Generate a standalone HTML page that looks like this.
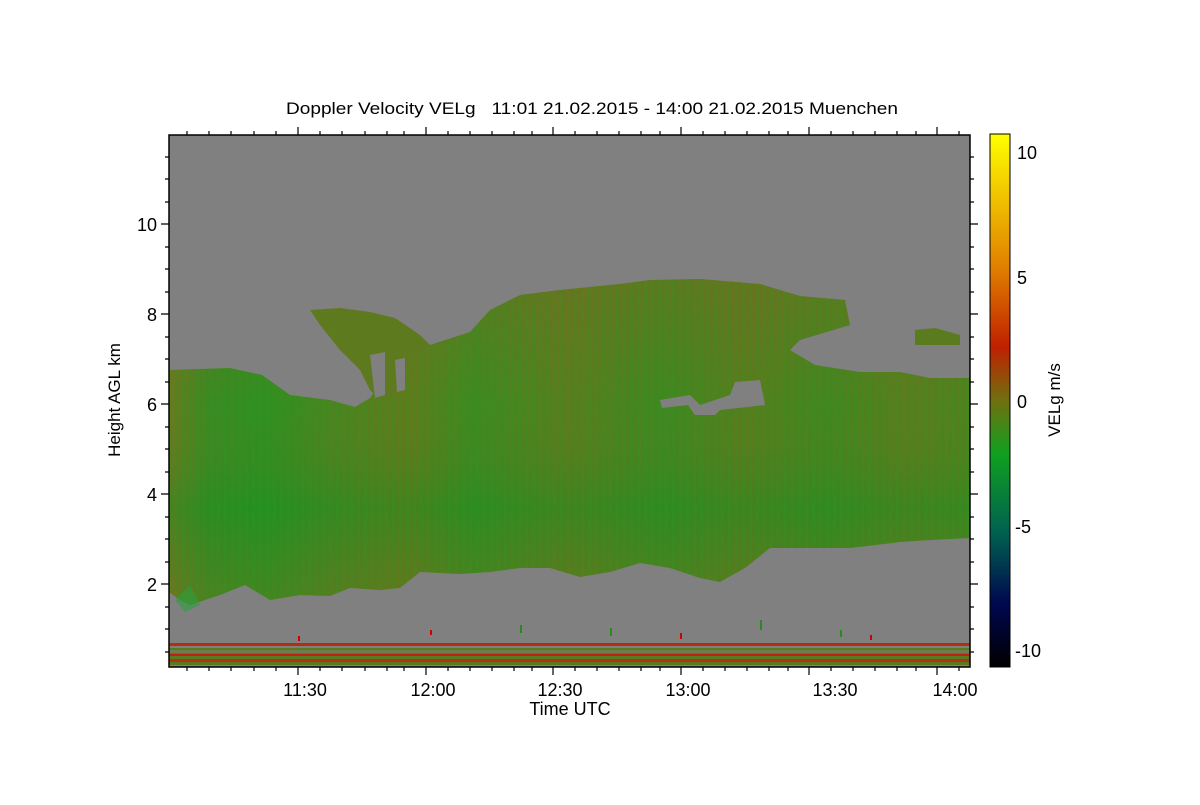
<!DOCTYPE html>
<html><head><meta charset="utf-8"><style>
html,body{margin:0;padding:0;background:#fff;}
svg text{font-family:"Liberation Sans",sans-serif;fill:#000;white-space:pre;}
</style></head><body>
<svg width="1200" height="800" viewBox="0 0 1200 800" xmlns="http://www.w3.org/2000/svg">
<defs>
<linearGradient id="cb" x1="0" y1="0" x2="0" y2="1">
<stop offset="0" stop-color="#ffff00"/>
<stop offset="0.25" stop-color="#e08000"/>
<stop offset="0.4" stop-color="#c02000"/>
<stop offset="0.5" stop-color="#707010"/>
<stop offset="0.6" stop-color="#10a020"/>
<stop offset="0.75" stop-color="#006050"/>
<stop offset="0.88" stop-color="#000850"/>
<stop offset="1" stop-color="#000000"/>
</linearGradient>
<linearGradient id="cl" x1="0" y1="0" x2="1" y2="0">
<stop offset="0" stop-color="#6a7a20"/>
<stop offset="0.05" stop-color="#3a8a22"/>
<stop offset="0.12" stop-color="#2e9020"/>
<stop offset="0.2" stop-color="#4a8420"/>
<stop offset="0.3" stop-color="#607a1c"/>
<stop offset="0.38" stop-color="#3c8a20"/>
<stop offset="0.5" stop-color="#5a7c1e"/>
<stop offset="0.62" stop-color="#3e8820"/>
<stop offset="0.72" stop-color="#587c1e"/>
<stop offset="0.82" stop-color="#42861f"/>
<stop offset="0.92" stop-color="#5a7c1e"/>
<stop offset="1" stop-color="#4e821e"/>
</linearGradient>
<linearGradient id="cv" x1="0" y1="0" x2="0" y2="1">
<stop offset="0" stop-color="#7a6a20" stop-opacity="0.5"/>
<stop offset="0.4" stop-color="#7a6a20" stop-opacity="0"/>
<stop offset="0.7" stop-color="#109020" stop-opacity="0.35"/>
<stop offset="1" stop-color="#7a6a20" stop-opacity="0.3"/>
</linearGradient>
<pattern id="st" width="7" height="40" patternUnits="userSpaceOnUse">
<rect width="3" height="40" fill="#2a9a20" opacity="0.2"/>
</pattern>
</defs>
<text x="286" y="114" font-size="17" textLength="612" lengthAdjust="spacingAndGlyphs">Doppler Velocity VELg   11:01 21.02.2015 - 14:00 21.02.2015 Muenchen</text>
<rect x="169" y="135" width="801" height="532" fill="#808080"/>
<g>
<path d="M169 370 L230 368 L262 375 L290 395 L330 400 L355 407 L370 398 L400 355 L430 345 L470 332 L490 310 L520 295 L560 290 L620 284 L650 280 L700 279 L760 284 L800 296 L845 300 L850 325 L800 340 L790 350 L815 365 L860 372 L900 372 L930 378 L970 378 L970 538 L930 540 L900 542 L850 548 L770 548 L745 568 L720 582 L700 578 L670 568 L640 563 L610 572 L580 577 L550 568 L520 568 L490 572 L460 574 L420 572 L400 588 L380 590 L350 588 L330 596 L300 595 L270 600 L245 585 L220 595 L190 605 L180 600 L169 592 Z" fill="url(#cl)"/>
<path d="M169 370 L230 368 L262 375 L290 395 L330 400 L355 407 L370 398 L400 355 L430 345 L470 332 L490 310 L520 295 L560 290 L620 284 L650 280 L700 279 L760 284 L800 296 L845 300 L850 325 L800 340 L790 350 L815 365 L860 372 L900 372 L930 378 L970 378 L970 538 L930 540 L900 542 L850 548 L770 548 L745 568 L720 582 L700 578 L670 568 L640 563 L610 572 L580 577 L550 568 L520 568 L490 572 L460 574 L420 572 L400 588 L380 590 L350 588 L330 596 L300 595 L270 600 L245 585 L220 595 L190 605 L180 600 L169 592 Z" fill="url(#cv)"/>
<path d="M169 370 L230 368 L262 375 L290 395 L330 400 L355 407 L370 398 L400 355 L430 345 L470 332 L490 310 L520 295 L560 290 L620 284 L650 280 L700 279 L760 284 L800 296 L845 300 L850 325 L800 340 L790 350 L815 365 L860 372 L900 372 L930 378 L970 378 L970 538 L930 540 L900 542 L850 548 L770 548 L745 568 L720 582 L700 578 L670 568 L640 563 L610 572 L580 577 L550 568 L520 568 L490 572 L460 574 L420 572 L400 588 L380 590 L350 588 L330 596 L300 595 L270 600 L245 585 L220 595 L190 605 L180 600 L169 592 Z" fill="url(#st)"/>
<path d="M310 310 L340 308 L370 312 L395 318 L420 335 L430 345 L410 360 L395 395 L380 400 L370 390 L360 370 L340 350 L320 325 Z" fill="#5e7a1e"/>
<path d="M370 355 L385 352 L385 395 L375 398 Z M395 360 L405 358 L405 390 L397 392 Z" fill="#808080"/>
<path d="M660 400 L690 395 L700 405 L730 395 L735 382 L760 380 L765 405 L720 410 L715 415 L695 415 L688 405 L662 408 Z" fill="#808080"/>
<path d="M915 330 L935 328 L960 335 L960 345 L915 345 Z" fill="#5a7c1e"/>
<path d="M190 585 L200 605 L185 612 L175 600 Z" fill="#2aa040" opacity="0.6"/>
</g>
<rect x="169" y="643" width="801" height="3" fill="#b03010"/>
<rect x="169" y="648" width="801" height="17" fill="#5a7a20"/>
<rect x="169" y="654" width="801" height="2" fill="#c02010"/>
<rect x="169" y="659" width="801" height="3" fill="#c82010" opacity="0.8"/>
<rect x="169" y="650" width="801" height="3" fill="#808080" opacity="0.5"/>
<g fill="#d00000"><rect x="680" y="633" width="2" height="6"/><rect x="430" y="630" width="2" height="5"/><rect x="870" y="635" width="2" height="5"/><rect x="298" y="636" width="2" height="5"/></g>
<g fill="#2a8a20"><rect x="520" y="625" width="2" height="8"/><rect x="760" y="620" width="2" height="10"/><rect x="610" y="628" width="2" height="8"/><rect x="840" y="630" width="2" height="7"/></g>
<rect x="169" y="135" width="801" height="532" fill="none" stroke="#000" stroke-width="1.5"/>
<g stroke="#000" stroke-width="1.2">
<path d="M169 224h-8M169 314h-8M169 404h-8M169 494h-8M169 584h-8 M970 224h8M970 314h8M970 404h8M970 494h8M970 584h8"/>
<path d="M169 157h-4M169 179h-4M169 202h-4M169 247h-4M169 269h-4M169 292h-4M169 337h-4M169 359h-4M169 382h-4M169 427h-4M169 449h-4M169 472h-4M169 517h-4M169 539h-4M169 562h-4M169 607h-4M169 629h-4M169 652h-4 M970 157h4M970 179h4M970 202h4M970 247h4M970 269h4M970 292h4M970 337h4M970 359h4M970 382h4M970 427h4M970 449h4M970 472h4M970 517h4M970 539h4M970 562h4M970 607h4M970 629h4M970 652h4"/>
<path d="M298 667v8M426 667v8M553 667v8M681 667v8M809 667v8M298 135v-8M426 135v-8M553 135v-8M681 135v-8M809 135v-8M937 135v-8M937 667v8"/>
<path d="M187 667v4M209 667v4M231 667v4M254 667v4M276 667v4M320 667v4M342 667v4M365 667v4M387 667v4M404 667v4M448 667v4M470 667v4M492 667v4M514 667v4M532 667v4M575 667v4M597 667v4M619 667v4M641 667v4M660 667v4M703 667v4M725 667v4M747 667v4M769 667v4M788 667v4M831 667v4M853 667v4M875 667v4M897 667v4M916 667v4M959 667v4
M187 135v-4M209 135v-4M231 135v-4M254 135v-4M276 135v-4M320 135v-4M342 135v-4M365 135v-4M387 135v-4M404 135v-4M448 135v-4M470 135v-4M492 135v-4M514 135v-4M532 135v-4M575 135v-4M597 135v-4M619 135v-4M641 135v-4M660 135v-4M703 135v-4M725 135v-4M747 135v-4M769 135v-4M788 135v-4M831 135v-4M853 135v-4M875 135v-4M897 135v-4M916 135v-4M959 135v-4"/>
</g>
<g font-size="18" text-anchor="end">
<text x="157" y="231">10</text><text x="157" y="321">8</text><text x="157" y="411">6</text><text x="157" y="501">4</text><text x="157" y="591">2</text>
</g>
<g font-size="18" text-anchor="middle">
<text x="305" y="696">11:30</text><text x="433" y="696">12:00</text><text x="560" y="696">12:30</text><text x="688" y="696">13:00</text><text x="835" y="696">13:30</text><text x="955" y="696">14:00</text>
</g>
<text x="570" y="715" font-size="18" text-anchor="middle">Time UTC</text>
<text transform="translate(120 400) rotate(-90)" font-size="17" text-anchor="middle">Height AGL km</text>
<rect x="990" y="134" width="20" height="533" fill="url(#cb)" stroke="#000" stroke-width="1"/>
<text x="1017" y="159" font-size="18">10</text><text x="1017" y="284" font-size="18">5</text><text x="1017" y="408" font-size="18">0</text><text x="1015" y="533" font-size="18">-5</text><text x="1015" y="657" font-size="18">-10</text>
<text transform="translate(1060 400) rotate(-90)" font-size="17" text-anchor="middle">VELg m/s</text>
</svg>
</body></html>
